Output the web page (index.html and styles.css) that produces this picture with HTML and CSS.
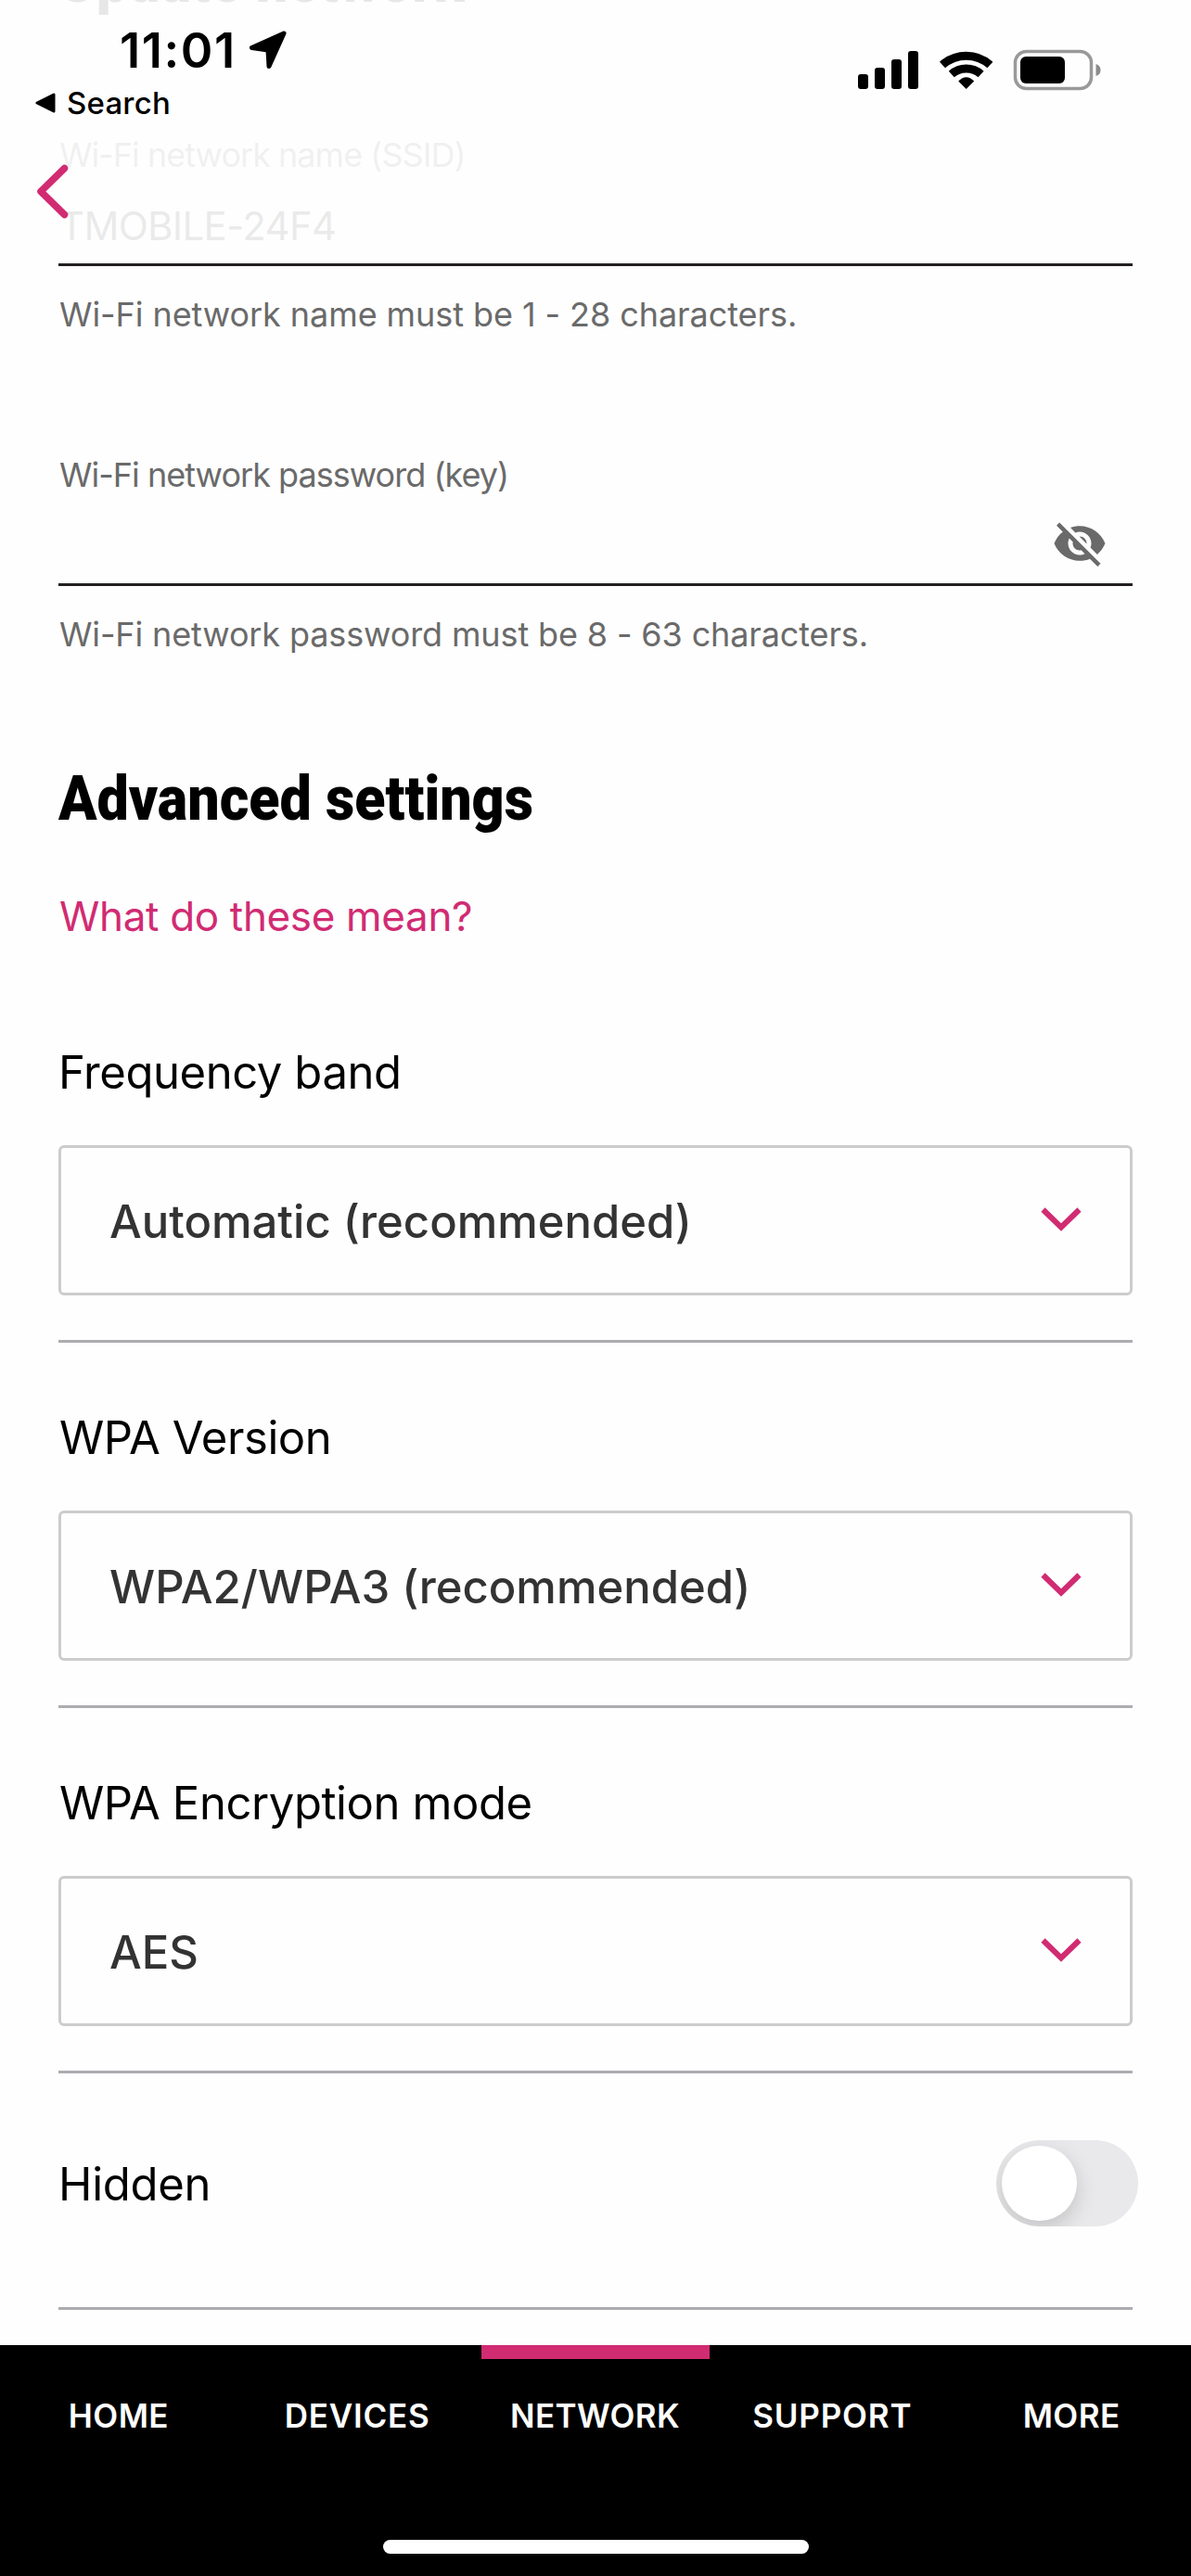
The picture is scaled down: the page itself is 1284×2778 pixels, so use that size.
FILE: index.html
```html
<!DOCTYPE html>
<html lang="en">
<head>
<meta charset="utf-8">
<title>Network settings</title>
<link rel="stylesheet" href="styles.css">
</head>
<body>
<div class="screen">
  <main class="content">
    <h2 class="heading heading-update">Update network</h2>

    <div class="field field-name">
      <label class="field-label">Wi-Fi network name (SSID)</label>
      <div class="field-input"><span class="field-value">TMOBILE-24F4</span></div>
      <p class="field-hint">Wi-Fi network name must be 1 - 28 characters.</p>
    </div>

    <div class="field field-password">
      <label class="field-label">Wi-Fi network password (key)</label>
      <div class="field-input">
        <svg class="eye" viewBox="0 0 24 24"><path d="M12 7c2.76 0 5 2.24 5 5 0 .65-.13 1.26-.36 1.83l2.92 2.92c1.51-1.26 2.7-2.89 3.43-4.75-1.73-4.39-6-7.5-11-7.5-1.4 0-2.74.25-3.98.7l2.16 2.16C10.74 7.13 11.35 7 12 7zM2 4.27l2.28 2.28.46.46C3.08 8.3 1.78 10.02 1 12c1.73 4.39 6 7.5 11 7.5 1.55 0 3.03-.3 4.38-.84l.42.42L19.73 22 21 20.73 3.27 3 2 4.27zM7.53 9.8l1.55 1.55c-.05.21-.08.43-.08.65 0 1.66 1.34 3 3 3 .22 0 .44-.03.65-.08l1.55 1.55c-.67.33-1.41.53-2.2.53-2.76 0-5-2.24-5-5 0-.79.2-1.53.53-2.2zm4.31-.78l3.15 3.15.02-.16c0-1.66-1.34-3-3-3l-.17.01z"/></svg>
      </div>
      <p class="field-hint hint-password">Wi-Fi network password must be 8 - 63 characters.</p>
    </div>

    <h2 class="heading heading-advanced">Advanced settings</h2>
    <a class="help-link">What do these mean?</a>

    <section class="setting">
      <h3 class="setting-label">Frequency band</h3>
      <div class="select"><span>Automatic (recommended)</span><svg class="chevron" viewBox="0 0 44 26"><path d="M2.5 2.5 22 21.5 41.5 2.5"/></svg></div>
    </section>
    <section class="setting">
      <h3 class="setting-label label-wpa">WPA Version</h3>
      <div class="select"><span>WPA2/WPA3 (recommended)</span><svg class="chevron" viewBox="0 0 44 26"><path d="M2.5 2.5 22 21.5 41.5 2.5"/></svg></div>
    </section>
    <section class="setting">
      <h3 class="setting-label label-wpa">WPA Encryption mode</h3>
      <div class="select"><span>AES</span><svg class="chevron" viewBox="0 0 44 26"><path d="M2.5 2.5 22 21.5 41.5 2.5"/></svg></div>
    </section>
    <section class="setting-toggle">
      <h3 class="setting-label label-hidden">Hidden</h3>
      <div class="toggle"><div class="knob"></div></div>
    </section>
  </main>

  <header class="topbar">
    <div class="status">
      <div class="status-left">
        <div class="clock-row">
          <span class="clock">11:01</span>
          <svg class="location" viewBox="0 0 44 44"><path d="M39 4 4.500 19.500 22 22 23 39.500Z"/></svg>
        </div>
        <div class="return-row">
          <svg class="return-icon" viewBox="0 0 22 22"><path d="M2 11 20 2V20Z"/></svg>
          <span class="return">Search</span>
        </div>
      </div>
      <svg class="status-icons" viewBox="0 0 264 46">
        <rect x="1" y="27" width="11" height="16" rx="3"/>
        <rect x="19" y="20" width="11" height="23" rx="3"/>
        <rect x="37" y="11" width="11" height="32" rx="3"/>
        <rect x="55" y="2" width="11" height="41" rx="3"/>
        <g class="wifi">
          <path d="M92 17A38.500 38.500 0 0 1 143.400 17"/>
          <path d="M101.800 27A24 24 0 0 1 133.600 27"/>
        </g>
        <path d="M109.200 34.500Q117.700 26 126.200 34.500L117.700 43Z"/>
        <rect class="battery" x="170.500" y="2.500" width="82" height="40" rx="12"/>
        <rect x="176" y="8" width="48" height="29" rx="6"/>
        <path class="battery-cap" d="M257.500 16Q262.500 17.500 262.500 22.500T257.500 29Z"/>
      </svg>
    </div>
    <svg class="back" viewBox="0 0 36 60"><path d="M31.500 5.500 6 30.500 31.500 55.500"/></svg>
  </header>

  <nav class="tabs">
    <div class="tab-row">
      <a class="tab">HOME</a>
      <a class="tab tab-wide">DEVICES</a>
      <a class="tab tab-active">NETWORK</a>
      <a class="tab tab-wide tab-support">SUPPORT</a>
      <a class="tab">MORE</a>
    </div>
    <div class="home-indicator"></div>
  </nav>
</div>
</body>
</html>
```
FILE: styles.css
```css
* { box-sizing: border-box; }

body {
  margin: 0;
  background: #fefefe;
  color: #000;
  font-family: Inter, "Liberation Sans", sans-serif;
}

h2, h3, p { margin: 0; font-weight: 400; }
svg { display: block; flex: none; }

.screen {
  position: relative;
  display: flex;
  flex-direction: column;
  width: 1284px;
  height: 2778px;
  overflow: hidden;
}

/* Scrolled form */
.content {
  flex: 1;
  min-height: 0;
  padding: 0 63px;
  margin-top: -61px;
}

.heading {
  font: 900 67.5px/80px Roboto, "Liberation Sans", sans-serif;
  white-space: nowrap;
  transform: scaleX(0.903);
  transform-origin: left;
}
.heading-update { letter-spacing: 0.3px; }
.heading-advanced { margin-top: 115px; }

.field-name { margin-top: 126px; }
.field-password { margin-top: 129px; }

.field-label, .field-hint {
  display: block;
  padding-left: 1px;
  font-size: 36px;
  line-height: 44px;
  color: #6a6a6a;
}
.field-label { letter-spacing: -0.98px; }
.field-hint { margin-top: 30px; letter-spacing: -0.07px; }
.hint-password { letter-spacing: -0.13px; }

.field-input {
  display: flex;
  justify-content: space-between;
  height: 98px;
  padding: 25px 25px 0 1px;
  border-bottom: 3px solid #231f20;
}
.field-value { font-size: 42px; line-height: 60px; letter-spacing: -0.7px; color: #222; }
.eye { width: 60px; height: 60px; margin: -3px 2px 0 auto; fill: #6a6a6a; }

.help-link {
  display: block;
  margin-top: 57px;
  padding-left: 1px;
  font-size: 44px;
  line-height: 60px;
  letter-spacing: -0.34px;
  color: #d12b72;
}

.setting {
  padding-bottom: 48px;
  margin-top: 73px;
  border-bottom: 3px solid #acacb1;
}
.help-link + .setting { margin-top: 109px; }

.setting-label {
  font-size: 49px;
  line-height: 60px;
  letter-spacing: -0.42px;
}
.label-wpa { padding-left: 1px; }
.label-hidden { padding-top: 2px; letter-spacing: -0.28px; }

.select {
  display: flex;
  align-items: center;
  justify-content: space-between;
  height: 162px;
  margin-top: 48px;
  padding: 0 52px;
  border: 3px solid #ccc;
  border-radius: 6px;
  font-size: 49px;
  font-weight: 500;
  line-height: 60px;
  color: #333;
}
.select span { padding-top: 3px; }
.chevron { width: 44px; height: 26px; margin-bottom: 2px; fill: none; stroke: #d12b72; stroke-width: 6; }

.setting-toggle {
  display: flex;
  align-items: center;
  justify-content: space-between;
  margin-right: -6px;
  padding: 72px 0 90px;
  background: linear-gradient(#acacb1, #acacb1) left bottom / 1158px 3px no-repeat;
  height: 255px;
}
.toggle {
  display: flex;
  width: 153px;
  height: 93px;
  padding: 6px;
  border-radius: 47px;
  background: #e9e9eb;
  overflow: hidden;
}
.knob {
  width: 81px;
  height: 81px;
  border-radius: 50%;
  background: #fff;
  box-shadow: 0 8px 22px rgba(0, 0, 0, 0.17);
}

/* Translucent bar over the form */
.topbar {
  position: absolute;
  inset: 0 0 auto 0;
  height: 280px;
  background: rgba(254, 254, 254, 0.91);
}
.status {
  display: flex;
  justify-content: space-between;
  height: 176px;
  padding: 24px 96px 0 38px;
}
.clock-row { display: flex; align-items: center; height: 60px; padding-left: 91px; }
.clock { font-size: 52.5px; font-weight: 600; line-height: 60px; letter-spacing: 1.56px; }
.location { width: 44px; height: 44px; margin-left: 12px; stroke: #000; stroke-width: 5; stroke-linejoin: round; }
.return-row { display: flex; align-items: center; height: 44px; margin-top: 5px; }
.return-icon { width: 22px; height: 22px; stroke: #000; stroke-width: 3; stroke-linejoin: round; }
.return { margin-left: 12px; font-size: 33px; font-weight: 500; line-height: 44px; letter-spacing: 0.19px; }
.status-icons { width: 264px; height: 46px; margin-top: 29px; }
.wifi { fill: none; stroke: #000; stroke-width: 9; }
.battery { fill: none; stroke: #999; stroke-width: 3.5; }
.battery-cap { fill: #8c8c8c; }
.back { width: 36px; height: 60px; margin-left: 38px; fill: none; stroke: #d12b72; stroke-width: 7.5; stroke-linecap: round; stroke-linejoin: round; }

/* Bottom navigation */
.tabs {
  display: flex;
  flex-direction: column;
  justify-content: space-between;
  height: 249px;
  padding-bottom: 24px;
  background: #000;
  color: #fff;
  z-index: 1;
}
.tab-row { display: grid; grid-template-columns: repeat(5, 1fr); }
.tab {
  margin: 0 5px;
  padding: 39px 1px 0 0;
  border-top: 15px solid transparent;
  font-size: 35px;
  font-weight: 600;
  line-height: 44px;
  letter-spacing: 0.4px;
  text-align: center;
}
.tab-wide { padding-right: 0; letter-spacing: 0.8px; }
.tab-support { padding-right: 3px; }
.tab-active { border-color: #d12b72; }
.home-indicator { align-self: center; width: 459px; height: 15px; border-radius: 8px; background: #fff; }
```
